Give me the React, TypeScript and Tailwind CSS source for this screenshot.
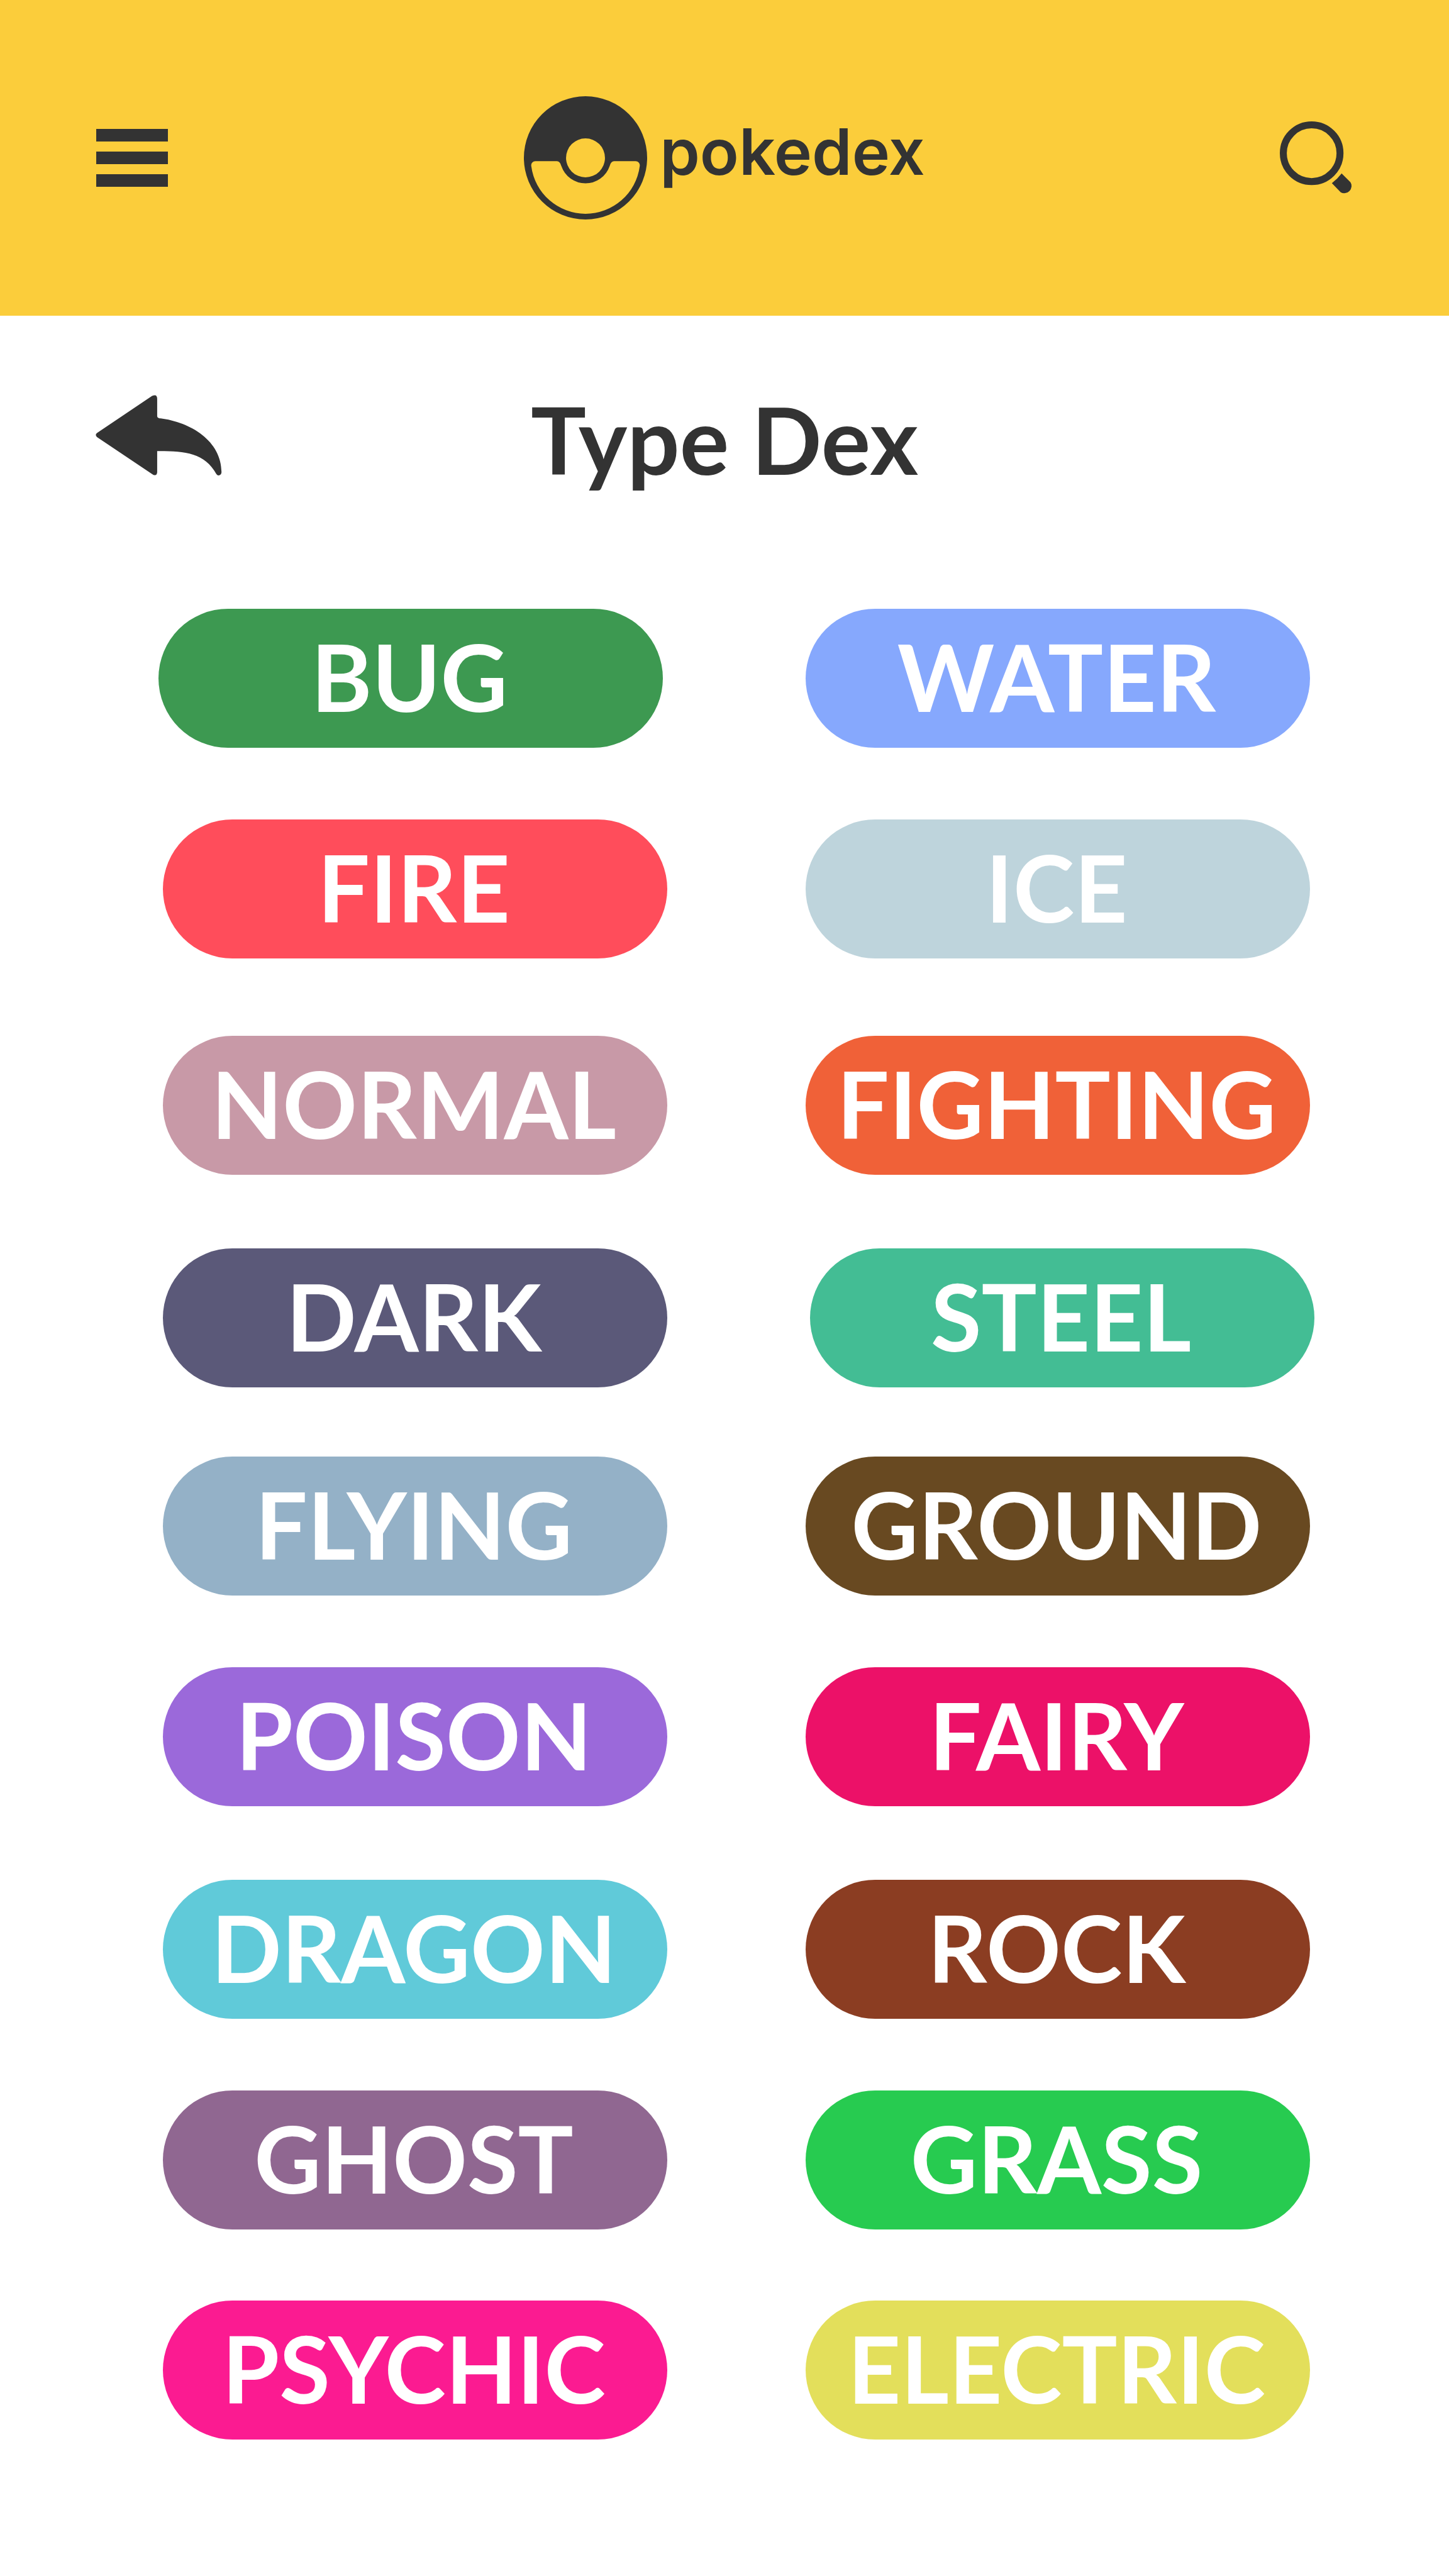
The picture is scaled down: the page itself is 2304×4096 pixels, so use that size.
const types = [
  ['BUG', 'bg-[#3d9951]', '-ml-[7px] mr-[7px]'],
  ['WATER', 'bg-[#86a8fd]', ''],
  ['FIRE', 'bg-[#ff4d5b]', ''],
  ['ICE', 'bg-[#bed4dc]', ''],
  ['NORMAL', 'bg-[#c899a7]', ''],
  ['FIGHTING', 'bg-[#f06138]', ''],
  ['DARK', 'bg-[#5b5979]', ''],
  ['STEEL', 'bg-[#43bd94]', 'ml-[7px] -mr-[7px]'],
  ['FLYING', 'bg-[#94b1c7]', ''],
  ['GROUND', 'bg-[#684921]', ''],
  ['POISON', 'bg-[#9b69da]', ''],
  ['FAIRY', 'bg-[#ec1168]', ''],
  ['DRAGON', 'bg-[#60cad9]', ''],
  ['ROCK', 'bg-[#8b3d22]', ''],
  ['GHOST', 'bg-[#906791]', ''],
  ['GRASS', 'bg-[#27cb50]', ''],
  ['PSYCHIC', 'bg-[#fb1b91]', ''],
  ['ELECTRIC', 'bg-[#e3df5b]', ''],
];

function Logo() {
  return (
    <svg viewBox="0 0 266 266" className="h-[196px] w-[196px]" fill="#333333" aria-hidden="true">
      <path
        fillRule="evenodd"
        d="M133 0a133 133 0 1 0 0 266a133 133 0 1 0 0-266ZM91 133a42 42 0 1 0 84 0a42 42 0 1 0-84 0ZM25 140H71C77 140 79 145 81 151A55 55 0 0 0 185 151C187 145 189 140 195 140H241C247 140 251 145 250 151A118 118 0 0 1 16 151C15 145 19 140 25 140Z"
      />
    </svg>
  );
}

export default function App() {
  return (
    <div className="min-h-screen bg-white font-['Lato',sans-serif] text-[#333333]">
      <header className="grid h-[502px] grid-cols-[1fr_auto_1fr] items-center bg-[#fbcd3b] px-[153px]">
        <button type="button" aria-label="Menu" className="flex w-[114px] flex-col gap-4">
          <span className="h-5 bg-[#333333]" />
          <span className="h-5 bg-[#333333]" />
          <span className="h-5 bg-[#333333]" />
        </button>
        <a href="#home" className="flex items-center gap-5">
          <Logo />
          <span className="pb-5 font-['Inter',sans-serif] text-[102px] leading-[120px] font-semibold">pokedex</span>
        </a>
        <button type="button" aria-label="Search" className="justify-self-end">
          <svg viewBox="0 0 157 157" className="h-[116px] w-[116px]" fill="#333333" aria-hidden="true">
            <circle cx="68.5" cy="68.5" r="61" fill="none" stroke="#333333" strokeWidth="15" />
            <path d="M133 112L152 131A15.500 15.500 0 0 1 131 152.500L112 133Q124 124 133 112Z" />
          </svg>
        </button>
      </header>
      <main>
        <div className="grid grid-cols-[1fr_auto_1fr] items-center px-[152px] pt-[106px]">
          <a href="#back" aria-label="Back" className="justify-self-start pb-3">
            <svg viewBox="0 0 273 175" className="h-[129px] w-[201px]" fill="#333333" aria-hidden="true">
              <path d="M3 82L122 2Q133-3 133 8V46Q133 49 137 50C205 58 272 99 272 167Q272 171 268 173Q264 175 261 171C235 123 190 121 133 121V167Q132 176 124 172L3 91Q-2 86 3 82Z" />
            </svg>
          </a>
          <h1 className="text-[147px] leading-[180px] font-bold">Type Dex</h1>
        </div>
        <div className="grid grid-cols-2 grid-rows-[335px_344px_338px_331px_335px_338px_335px_334px_221px] items-start gap-x-[220px] pt-[180px] pr-[221px] pb-[215px] pl-[259px]">
          {types.map(([name, color, shift]) => (
            <button
              key={name}
              type="button"
              className={`flex h-[221px] items-center justify-center rounded-full pr-1 pb-2 text-[147px] leading-[176px] font-bold text-white ${color} ${shift}`}
            >
              {name}
            </button>
          ))}
        </div>
      </main>
    </div>
  );
}
